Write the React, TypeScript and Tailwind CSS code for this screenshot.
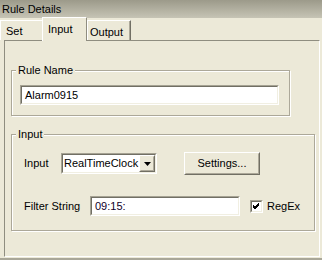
import React from "react";

function Sunken({ className = "", children }: { className?: string; children?: React.ReactNode }) {
  return (
    <div className={"border border-t-[#a5a293] border-l-[#a5a293] border-b-white border-r-white " + className}>
      <div className="w-full h-full border border-t-[#716f64] border-l-[#716f64] border-b-[#f1efe2] border-r-[#f1efe2] bg-white flex items-center">
        {children}
      </div>
    </div>
  );
}

function Raised({ className = "", children }: { className?: string; children?: React.ReactNode }) {
  return (
    <div className={"border border-t-white border-l-white border-b-[#716f64] border-r-[#716f64] " + className}>
      <div className="w-full h-full border border-t-[#ece9d8] border-l-[#ece9d8] border-b-[#aca899] border-r-[#aca899] bg-[#ece9d8] flex items-center justify-center">
        {children}
      </div>
    </div>
  );
}

export default function App() {
  return (
    <div className="w-[322px] h-[260px] bg-[#ece9d8] flex flex-col overflow-hidden text-[11px] leading-[13px] text-black font-['Liberation_Sans',Arial,sans-serif]">
      <div className="h-[18px] shrink-0 bg-linear-to-b from-[#9c9a8a] to-[#c6c4b5] flex items-center pl-[2px]">
        Rule Details
      </div>
      <div className="h-[22px] shrink-0 flex items-end">
        <div className="w-[42px] h-[20px] border-t border-l border-white pl-[5px] pt-[4px]">Set</div>
        <div className="relative z-10 w-[45px] h-[24px] -mb-px bg-[#ece9d8] border-t border-l border-white border-r border-r-[#8f8d80] pl-[5px] pt-[5px]">
          Input
        </div>
        <div className="w-[44px] h-[20px] border-t border-l border-white border-r border-r-[#716f64] shadow-[inset_-1px_0_0_#aca899] pl-[2px] pt-[5px]">
          Output
        </div>
      </div>
      <div className="ml-[4px] w-[316px] h-[217px] shrink-0 border border-t-[#8f8d80] border-l-[#8f8d80] border-r-white border-b-white flex flex-col">
        <div className="relative ml-[6px] mt-[29px] w-[279px] h-[46px] shrink-0 border border-[#aca899] shadow-[1px_1px_0_#fff,inset_1px_1px_0_#fff]">
          <span className="absolute left-[4px] -top-[8px] px-[2px] bg-[#ece9d8] leading-[14px]">Rule Name</span>
          <Sunken className="ml-[8px] mt-[14px] w-[259px] h-[20px]">
            <span className="pl-[3px]">Alarm0915</span>
          </Sunken>
        </div>
        <div className="relative ml-[6px] mt-[18px] w-[304px] h-[97px] shrink-0 border border-[#aca899] shadow-[1px_1px_0_#fff,inset_1px_1px_0_#fff]">
          <span className="absolute left-[4px] -top-[8px] px-[2px] bg-[#ece9d8] leading-[14px]">Input</span>
          <div className="flex items-center mt-[17px] pl-[12px] h-[23px]">
            <span className="w-[37px]">Input</span>
            <Sunken className="w-[96px] h-[21px]">
              <span className="pl-[1px] flex-1">RealTimeClock</span>
              <Raised className="w-[16px] h-[17px]">
                <svg width="7" height="4" viewBox="0 0 7 4">
                  <path d="M0 0H7L3.5 4Z" fill="#000" />
                </svg>
              </Raised>
            </Sunken>
            <Raised className="ml-[27px] w-[76px] h-[23px]">
              <span>Settings...</span>
            </Raised>
          </div>
          <div className="flex items-center mt-[21px] pl-[12px] h-[20px]">
            <span className="w-[66px]">Filter String</span>
            <Sunken className="w-[150px] h-[20px]">
              <span className="pl-[3px] text-[#10002a]">09:15:</span>
            </Sunken>
            <Sunken className="ml-[10px] w-[13px] h-[13px]">
              <svg width="9" height="9" viewBox="0 0 9 9" className="mx-auto">
                <path d="M1 4L3 6L7 2M1 5L3 7L7 3M1 3L3 5L7 1" stroke="#000" strokeWidth="1" fill="none" />
              </svg>
            </Sunken>
            <span className="ml-[4px]">RegEx</span>
          </div>
        </div>
      </div>
      <div className="h-px shrink-0" />
      <div className="h-[2px] shrink-0 bg-[#a9a798]" />
    </div>
  );
}
